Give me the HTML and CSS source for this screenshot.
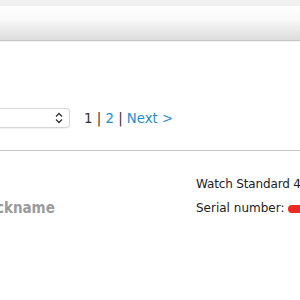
FILE: index.html
```html
<!DOCTYPE html>
<html>
<head>
<meta charset="utf-8">
<link rel="stylesheet" href="styles.css">
</head>
<body>
<div class="topstrip"></div>
<div class="toolbar"></div>
<div class="controls">
  <div class="select">
    <svg class="chev" width="8" height="12" viewBox="0 0 8 12"><path d="M1 4.5 L4 1.5 L7 4.5 M1 7.5 L4 10.5 L7 7.5" fill="none" stroke="#333" stroke-width="1.3"/></svg>
  </div>
  <div class="pager"><span class="cur">1</span> <span class="sep">|</span> <a class="link">2</a> <span class="sep">|</span> <a class="link">Next &gt;</a></div>
</div>
<div class="divider"></div>
<div class="device">
  <div class="nick">Nickname</div>
  <div class="info">
    <div class="model">Watch Standard 4</div>
    <div class="serial">Serial number: <span class="redact"></span></div>
  </div>
</div>
</body>
</html>
```
FILE: styles.css
```css
html, body { margin: 0; padding: 0; background: #fff; overflow: hidden; }
body { width: 300px; height: 300px; font-family: "DejaVu Sans", Verdana, sans-serif; color: #333; }
.topstrip { height: 6px; background: #f0f0f0; }
.toolbar { height: 34px; background: linear-gradient(#ffffff 0%, #f8f8f8 40%, #dddddd 100%); border-bottom: 1px solid #c6c6c6; box-shadow: 0 1px 1px rgba(0,0,0,0.05); }
.controls { display: flex; align-items: center; margin-top: 67px; height: 20px; }
.select { width: 70px; height: 18px; margin-left: -7px; border: 1px solid #d6d6d6; border-left: none; border-radius: 0 4px 4px 0; display: flex; align-items: center; justify-content: flex-end; padding-right: 6px; box-sizing: content-box; box-shadow: 0 1px 1px rgba(0,0,0,0.06); }
.chev { display: block; }
.pager { margin-left: 14px; font-size: 13.3px; color: #333; }
.link { color: #2a8ccc; text-decoration: none; }
.sep { color: #333; }
.divider { margin-top: 22px; height: 1px; background: #c8c8c8; }
.device { display: flex; justify-content: space-between; margin-top: 25px; }
.nick { margin-left: -20px; margin-top: 23px; font-size: 15px; font-weight: bold; font-stretch: condensed; font-family: "DejaVu Sans Condensed", "DejaVu Sans", sans-serif; color: #9a9a9a; }
.info { width: 104px; font-size: 12px; color: #222; white-space: nowrap; letter-spacing: -0.15px; }
.model { height: 24px; line-height: 16px; }
.serial { line-height: 16px; letter-spacing: 0; }
.redact { display: inline-block; width: 18px; height: 8px; background: #ec2a24; border-radius: 4px 0 0 4px; vertical-align: -1px; }
```
